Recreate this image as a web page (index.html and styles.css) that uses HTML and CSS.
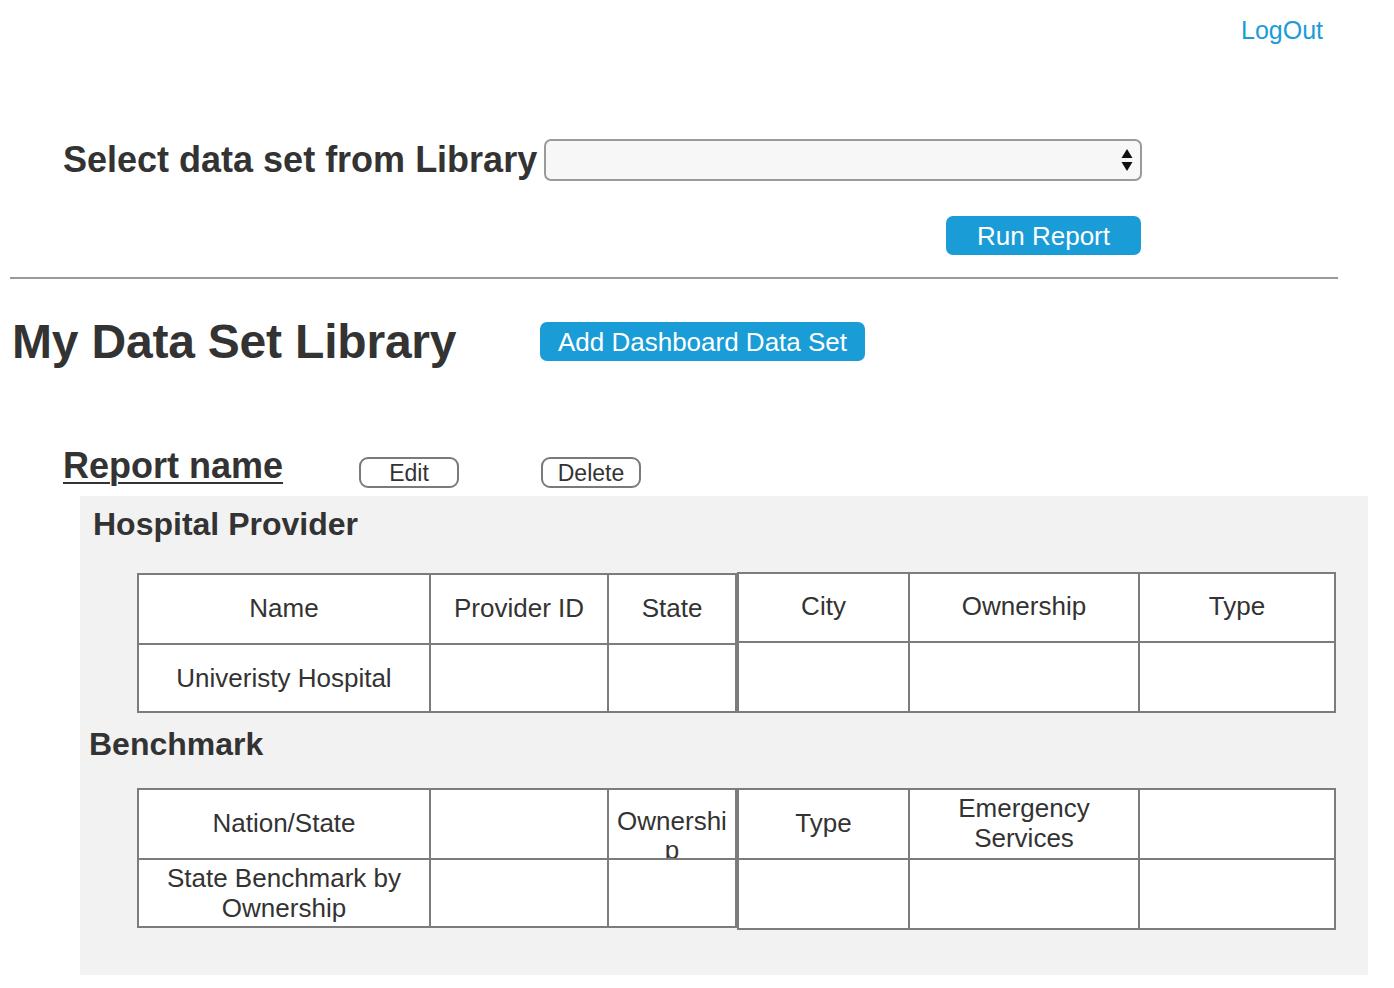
FILE: index.html
```html
<!DOCTYPE html>
<html lang="en">
<head>
<meta charset="utf-8">
<title>My Data Set Library</title>
<link rel="stylesheet" href="styles.css">
</head>
<body>
<header class="topbar">
  <a class="logout" href="#">LogOut</a>
</header>

<section class="select-row">
  <label class="select-label" for="lib">Select data set from Library</label>
  <div class="select-wrap">
    <select id="lib" class="select"><option></option></select>
    <svg class="select-arrows" width="12" height="24" viewBox="0 0 12 24" aria-hidden="true">
      <polygon points="6,1 11.5,10 0.5,10" fill="#111"/>
      <polygon points="0.5,14 11.5,14 6,23" fill="#111"/>
    </svg>
  </div>
</section>

<div class="run-row">
  <button class="btn-blue btn-run">Run Report</button>
</div>

<hr class="divider">

<section class="title-row">
  <h1 class="page-title">My Data Set Library</h1>
  <button class="btn-blue btn-add">Add Dashboard Data Set</button>
</section>

<section class="report-row">
  <h2 class="report-name">Report name</h2>
  <button class="btn-outline btn-edit">Edit</button>
  <button class="btn-outline btn-delete">Delete</button>
</section>

<section class="panel">
  <h3 class="panel-heading hp">Hospital Provider</h3>
  <div class="tables t1">
    <table class="grid left">
      <colgroup><col class="c1"><col class="c2"><col class="c3"></colgroup>
      <tr class="r1"><td>Name</td><td>Provider ID</td><td>State</td></tr>
      <tr class="r2"><td>Univeristy Hospital</td><td></td><td></td></tr>
    </table>
    <table class="grid right">
      <colgroup><col class="c4"><col class="c5"><col class="c6"></colgroup>
      <tr class="r1"><td>City</td><td>Ownership</td><td>Type</td></tr>
      <tr class="r2"><td></td><td></td><td></td></tr>
    </table>
  </div>

  <h3 class="panel-heading bm">Benchmark</h3>
  <div class="tables t2">
    <table class="grid left">
      <colgroup><col class="c1"><col class="c2"><col class="c3"></colgroup>
      <tr class="r1"><td>Nation/State</td><td></td><td class="clip-cell"><div class="clip">Ownershi<br>p</div></td></tr>
      <tr class="r2"><td class="two-line">State Benchmark by<br>Ownership</td><td></td><td></td></tr>
    </table>
    <table class="grid right">
      <colgroup><col class="c4"><col class="c5"><col class="c6"></colgroup>
      <tr class="r1"><td>Type</td><td class="two-line">Emergency<br>Services</td><td></td></tr>
      <tr class="r2"><td></td><td></td><td></td></tr>
    </table>
  </div>
</section>
</body>
</html>
```

FILE: styles.css
```css
html, body {
  margin: 0;
  padding: 0;
  background: #fff;
}

body {
  width: 1394px;
  font-family: "Liberation Sans", Arial, Helvetica, sans-serif;
  color: #333;
}

/* top bar */
.topbar {
  height: 139px;
  display: flex;
  justify-content: flex-end;
  align-items: flex-start;
  padding-right: 71px;
  box-sizing: border-box;
}

.logout {
  margin-top: 15px;
  font-size: 25px;
  line-height: 30px;
  color: #1a9cd7;
  text-decoration: none;
}

/* select row */
.select-row {
  display: flex;
  align-items: center;
  height: 42px;
  padding-left: 63px;
}

.select-label {
  font-size: 36px;
  font-weight: bold;
  line-height: 40px;
  color: #333;
  margin-right: 7px;
  white-space: nowrap;
}

.select-wrap {
  position: relative;
  width: 598px;
  height: 42px;
}

.select {
  -webkit-appearance: none;
  appearance: none;
  width: 100%;
  height: 100%;
  box-sizing: border-box;
  border: 2px solid #9a9a9a;
  border-radius: 7px;
  background: #f7f7f7;
  font-family: inherit;
  font-size: 20px;
  outline: none;
}

.select-arrows {
  position: absolute;
  right: 9px;
  top: 9px;
  pointer-events: none;
}

/* run row */
.run-row {
  width: 1141px;
  display: flex;
  justify-content: flex-end;
  margin-top: 35px;
}

.btn-blue {
  border: none;
  border-radius: 7px;
  background: #1a9cd7;
  color: #fff;
  font-family: inherit;
  font-size: 26px;
  line-height: 30px;
  padding: 0;
  cursor: pointer;
}

.btn-run {
  width: 195px;
  height: 39px;
}

.divider {
  margin: 22px 0 0 10px;
  width: 1328px;
  height: 0;
  border: none;
  border-top: 2px solid #9a9a9a;
}

/* title row */
.title-row {
  display: flex;
  align-items: center;
  height: 39px;
  margin-top: 43px;
  padding-left: 12px;
}

.page-title {
  margin: 0;
  font-size: 48px;
  line-height: 56px;
  font-weight: bold;
  color: #333;
  width: 528px;
  letter-spacing: -0.2px;
}

.btn-add {
  width: 325px;
  height: 39px;
}

/* report row */
.report-row {
  display: flex;
  align-items: flex-start;
  height: 30px;
  margin-top: 96px;
  padding-left: 63px;
}

.report-name {
  margin: -11px 0 0 0;
  font-size: 36px;
  line-height: 40px;
  font-weight: bold;
  text-decoration: underline;
  text-decoration-thickness: 2px;
  text-underline-offset: 4px;
  color: #333;
  width: 296px;
}

.btn-outline {
  width: 100px;
  height: 31px;
  box-sizing: border-box;
  border: 2px solid #7a7a7a;
  border-radius: 9px;
  background: #fff;
  font-family: inherit;
  font-size: 23px;
  line-height: 26px;
  color: #333;
  padding: 0;
}

.btn-delete {
  margin-left: 82px;
}

/* panel */
.panel {
  margin: 9px 0 0 80px;
  width: 1288px;
  height: 479px;
  background: #f2f2f2;
  box-sizing: border-box;
  padding-top: 10px;
}

.panel-heading {
  margin: 0;
  font-size: 32px;
  line-height: 36px;
  font-weight: bold;
  color: #333;
}

.hp {
  padding-left: 13px;
}

.bm {
  padding-left: 9px;
  margin-top: 13px;
}

.tables {
  display: flex;
  align-items: flex-start;
  margin-left: 57px;
}

.t1 {
  margin-top: 30px;
}

.t2 {
  margin-top: 26px;
}

.grid {
  border-collapse: collapse;
  table-layout: fixed;
  background: #fff;
  border: 2px solid #7c7c7c;
}

.grid td {
  border: 2px solid #7c7c7c;
  padding: 0;
  text-align: center;
  vertical-align: middle;
  font-size: 26px;
  line-height: 30px;
  color: #333;
}

.grid .r1 td {
  padding-bottom: 3px;
}

.left {
  width: 598px;
}

.right {
  width: 597px;
}

.t1 .left {
  margin-top: 1px;
}

.c1 { width: 292px; }
.c2 { width: 178px; }
.c3 { width: 128px; }
.c4 { width: 171px; }
.c5 { width: 230px; }
.c6 { width: 196px; }

.t1 .left .r1 td { height: 65px; }
.t1 .left .r2 td { height: 66px; }
.t1 .right .r1 td { height: 64px; }
.t1 .right .r2 td { height: 68px; }

.t2 .left .r1 td { height: 65px; }
.t2 .left .r2 td { height: 66px; }
.t2 .right .r1 td { height: 65px; }
.t2 .right .r2 td { height: 68px; }

.two-line {
  line-height: 30px;
}

.grid .r1 td.clip-cell {
  vertical-align: top;
  padding-bottom: 0;
}

.clip {
  height: 68px;
  overflow: hidden;
  box-sizing: border-box;
  padding-top: 17px;
  line-height: 29px;
}
```
